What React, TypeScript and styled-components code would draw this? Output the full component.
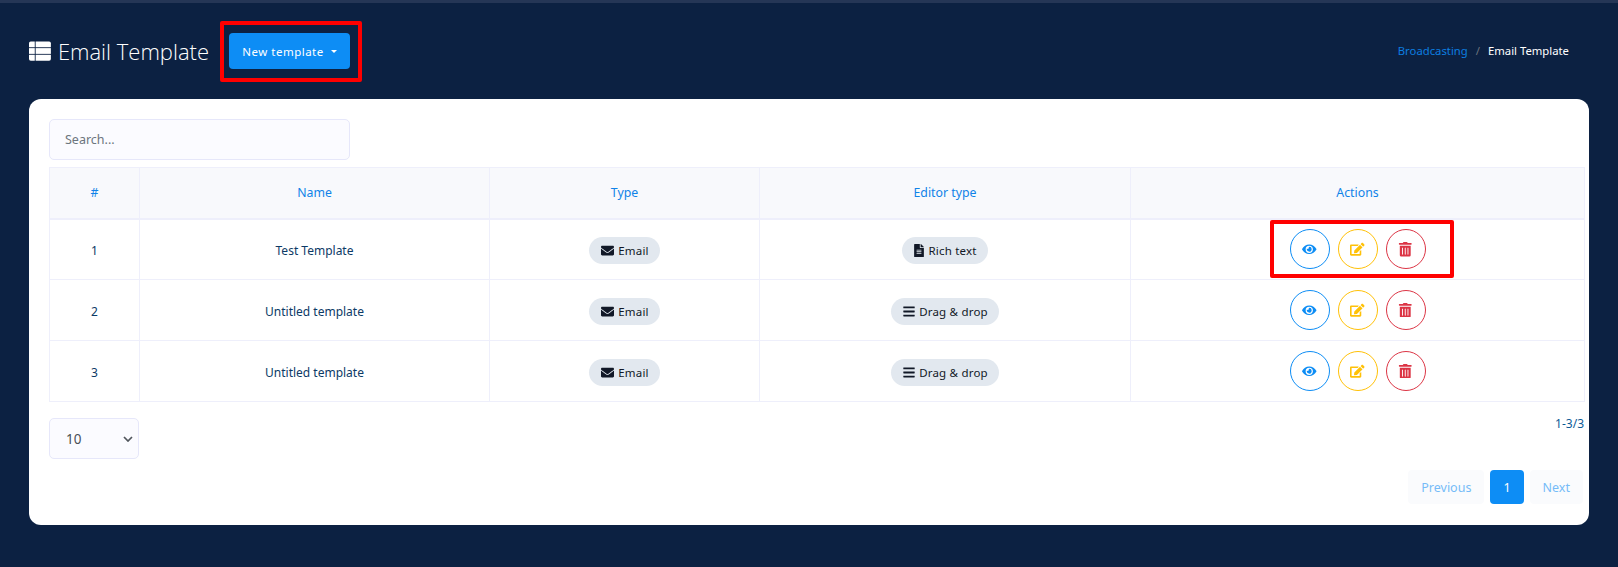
import React from "react";
import styled, { createGlobalStyle } from "styled-components";
import { FaBars, FaEdit, FaEnvelope, FaEye, FaFileAlt, FaTrashAlt } from "react-icons/fa";

const FONT = `"Noto Sans", "Open Sans", sans-serif`;

const rows = [
  { id: 1, name: "Test Template", editor: "Rich text" },
  { id: 2, name: "Untitled template", editor: "Drag & drop" },
  { id: 3, name: "Untitled template", editor: "Drag & drop" },
];

// solid three-row grid, the page title's icon
function GridIcon() {
  return (
    <svg width="25" height="22" viewBox="0 0 25 22" fill="#fff">
      <path d="M2 0h4.6v6.6H0V2a2 2 0 0 1 2-2z" />
      <path d="M7.6 0H23a2 2 0 0 1 2 2v4.6H7.6z" />
      <path d="M0 7.7h6.6v6.6H0z" />
      <path d="M7.6 7.7H25v6.6H7.6z" />
      <path d="M0 15.4h6.6V22H2a2 2 0 0 1-2-2z" />
      <path d="M7.6 15.4H25V20a2 2 0 0 1-2 2H7.6z" />
    </svg>
  );
}

export default function App() {
  return (
    <Page>
      <GlobalStyle />
      <TopStrip />
      <Header>
        <Title>
          <GridIcon />
          Email Template
        </Title>
        <Highlight>
          <NewButton>
            New template
            <Caret />
          </NewButton>
        </Highlight>
        <Breadcrumb>
          <a>Broadcasting</a>
          <span className="sep">/</span>
          <span>Email Template</span>
        </Breadcrumb>
      </Header>
      <Card>
        <Search placeholder="Search..." />
        <Table>
          <colgroup>
            <col style={{ width: 90 }} />
            <col style={{ width: 350 }} />
            <col style={{ width: 270 }} />
            <col style={{ width: 371 }} />
            <col />
          </colgroup>
          <thead>
            <tr>
              <th>#</th>
              <th>Name</th>
              <th>Type</th>
              <th>Editor type</th>
              <th>Actions</th>
            </tr>
          </thead>
          <tbody>
            {rows.map((row) => (
              <tr key={row.id}>
                <td>{row.id}</td>
                <td>{row.name}</td>
                <td>
                  <Pill>
                    <FaEnvelope />
                    Email
                  </Pill>
                </td>
                <td>
                  <Pill>
                    {row.editor === "Rich text" ? <FileIcon /> : <BarsIcon />}
                    {row.editor}
                  </Pill>
                </td>
                <td className="actions">
                  <Actions>
                    <RoundButton $color="#0d8df5">
                      <FaEye />
                    </RoundButton>
                    <RoundButton $color="#ffc107">
                      <FaEdit />
                    </RoundButton>
                    <RoundButton $color="#dc3545">
                      <FaTrashAlt />
                    </RoundButton>
                    {row.id === 1 && <ActionsMark />}
                  </Actions>
                </td>
              </tr>
            ))}
          </tbody>
        </Table>
        <Footer>
          <PageSize>
            <span>10</span>
            <svg width="10" height="6" viewBox="0 0 10 6">
              <path d="M1 1l4 4 4-4" fill="none" stroke="#50555c" strokeWidth="1.7" />
            </svg>
          </PageSize>
          <FooterRight>
            <Count>1-3/3</Count>
            <Pager>
              <PageButton>Previous</PageButton>
              <PageButton $active>1</PageButton>
              <PageButton>Next</PageButton>
            </Pager>
          </FooterRight>
        </Footer>
      </Card>
    </Page>
  );
}

const GlobalStyle = createGlobalStyle`
  html, body {
    margin: 0;
    padding: 0;
    background: #0c2142;
  }
  * {
    box-sizing: border-box;
  }
`;

const Page = styled.div`
  width: 1618px;
  height: 567px;
  overflow: hidden;
  background: #0c2142;
  font-family: ${FONT};
  display: flex;
  flex-direction: column;
`;

const TopStrip = styled.div`
  height: 3px;
  background: #253656;
`;

const Header = styled.header`
  height: 96px;
  padding: 18px 49px 0 29px;
  display: flex;
  align-items: flex-start;
`;

const Title = styled.h1`
  margin: 12px 0 0;
  display: flex;
  align-items: center;
  gap: 7px;
  height: 36px;
  width: 180px;
  color: #fff;
  font-family: "Open Sans", sans-serif;
  font-size: 22px;
  font-weight: 300;
  white-space: nowrap;
`;

const Highlight = styled.div`
  position: relative;
  margin-left: 20px;
  margin-top: 12px;

  &::after {
    content: "";
    position: absolute;
    inset: -12px -12px -13px -9px;
    border: 4.5px solid #ff0000;
    border-radius: 2px;
  }
`;

const NewButton = styled.button`
  width: 121px;
  height: 36px;
  padding: 0;
  border: none;
  border-radius: 4px;
  background: #0d8df5;
  color: #fff;
  font-family: inherit;
  font-size: 11.5px;
  letter-spacing: 0.5px;
  display: flex;
  align-items: center;
  justify-content: center;
  gap: 7px;
`;

const Caret = styled.i`
  width: 0;
  height: 0;
  border-left: 3.5px solid transparent;
  border-right: 3.5px solid transparent;
  border-top: 3.5px solid #fff;
`;

const Breadcrumb = styled.nav`
  margin-left: auto;
  margin-top: 22px;
  display: flex;
  gap: 8px;
  color: #fff;
  font-size: 11.3px;
  line-height: 16px;

  a {
    color: #0d7ee0;
  }

  .sep {
    color: #6c757d;
  }
`;

const Card = styled.main`
  margin: 0 29px;
  height: 426px;
  padding: 20px 5px 0 20px;
  background: #fff;
  border-radius: 12px;
  display: flex;
  flex-direction: column;
`;

const Search = styled.input`
  width: 301px;
  height: 41px;
  padding: 0 15px;
  border: 1px solid #e6e7fa;
  border-radius: 5px;
  background: #fbfbff;
  font-family: inherit;
  font-size: 12.5px;
  flex: none;

  &::placeholder {
    color: #6c757d;
    opacity: 1;
  }
`;

const Table = styled.table`
  margin-top: 7px;
  width: 1536px;
  table-layout: fixed;
  border-collapse: collapse;
  font-size: 12px;
  text-align: center;
  color: #0c3a66;

  th,
  td {
    padding: 0;
    border: 1px solid #eeeffb;
  }

  th {
    height: 51px;
    background: #f8f9fc;
    border-bottom-width: 2px;
    color: #1083e8;
    font-size: 12.3px;
    font-weight: 400;
  }

  td {
    height: 61px;
    padding-top: 2px;
  }

  td.actions {
    padding-top: 0;
  }
`;

const Pill = styled.span`
  display: inline-flex;
  align-items: center;
  gap: 4px;
  height: 27px;
  padding: 0 11px 0 12px;
  border-radius: 13.5px;
  background: #e2e8ef;
  color: #111827;
  font-size: 11.5px;
  letter-spacing: 0.2px;

  svg {
    width: 13px;
    height: 13px;
  }
`;

const FileIcon = styled(FaFileAlt)`
  && {
    width: 10px;
  }
`;

const BarsIcon = styled(FaBars)`
  && {
    width: 12px;
  }
`;

const Actions = styled.div`
  position: relative;
  display: flex;
  justify-content: center;
  gap: 8px;
`;

const ActionsMark = styled.div`
  position: absolute;
  top: -9px;
  bottom: -9px;
  left: 139px;
  width: 184px;
  border: 4.5px solid #ff0000;
  border-radius: 2px;
`;

const RoundButton = styled.button<{ $color: string }>`
  width: 40px;
  height: 40px;
  padding: 0;
  border: 1px solid ${({ $color }) => $color};
  border-radius: 50%;
  background: transparent;
  color: ${({ $color }) => $color};
  display: flex;
  align-items: center;
  justify-content: center;

  svg {
    width: 14.5px;
    height: 14.5px;
  }
`;

const Footer = styled.div`
  display: flex;
  justify-content: space-between;
  width: 1536px;
  margin-top: 16px;
`;

const PageSize = styled.div`
  width: 90px;
  height: 41px;
  padding: 0 5px 0 16px;
  border: 1px solid #e6e7fa;
  border-radius: 5px;
  background: #fbfbff;
  color: #495057;
  font-size: 13.5px;
  display: flex;
  align-items: center;
  justify-content: space-between;
`;

const FooterRight = styled.div`
  margin-top: -2px;
  padding-right: 1px;
  display: flex;
  flex-direction: column;
  align-items: flex-end;
`;

const Count = styled.div`
  color: #0c5a96;
  font-size: 12px;
  line-height: 16px;
`;

const Pager = styled.div`
  margin-top: 38px;
  margin-right: 1px;
  display: flex;
  gap: 6px;
`;

const PageButton = styled.div<{ $active?: boolean }>`
  height: 34px;
  padding: 0 13px;
  border-radius: 4px;
  background: ${({ $active }) => ($active ? "#0d8df5" : "#fafbfd")};
  color: ${({ $active }) => ($active ? "#fff" : "#76bbf8")};
  font-size: 12.5px;
  display: flex;
  align-items: center;
`;
